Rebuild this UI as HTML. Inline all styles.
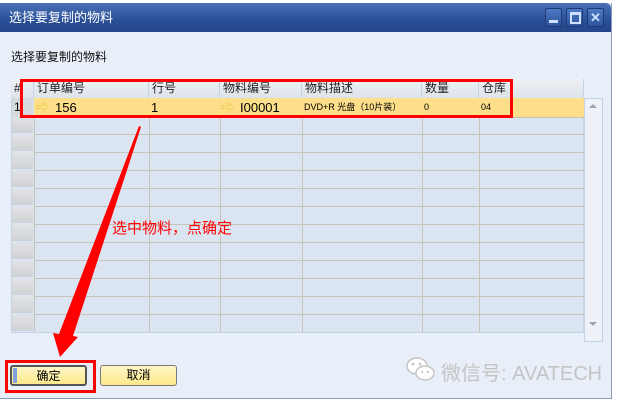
<!DOCTYPE html>
<html><head><meta charset="utf-8"><style>
body{margin:0;width:621px;height:401px;background:#fff;position:relative;overflow:hidden;font-family:"Liberation Sans","Noto Sans CJK SC",sans-serif;}
.win{position:absolute;left:0;top:3px;width:611px;height:395px;background:#e9eff8;border-right:1px solid #8a9bb5;border-bottom:1px solid #8a9bb5;}
.title{position:absolute;left:0;top:0;width:611px;height:29px;background:linear-gradient(#4a72b8,#2a4f96 60%,#244688);border-top-right-radius:5px;color:#fff;font-size:13px;line-height:29px;}
.title span{position:absolute;left:9px;}
.tb{position:absolute;top:5px;width:15px;height:17px;border:1px solid #1d3a75;background:linear-gradient(#4d78c3,#2c549c);border-radius:2px;}
.abs{position:absolute;}
.hdr{position:absolute;top:79px;height:19px;background:linear-gradient(#eef1f5,#dde3ea);border-right:1px solid #c5d3e6;font-size:12px;line-height:19px;padding-left:3px;box-sizing:border-box;color:#222;}
.btn{position:absolute;top:365px;height:21px;width:77px;box-sizing:border-box;border:1px solid #7a7a7a;border-radius:3px;background:linear-gradient(#fff6c8,#fde98a);font-size:12px;line-height:19px;text-align:center;color:#000;}
</style></head><body>
<div class="win">
 <div class="title"><span>选择要复制的物料</span>
  <div class="tb" style="left:545px"><div class="abs" style="left:3px;top:11px;width:9px;height:3px;background:#cfe0ff"></div></div>
  <div class="tb" style="left:566px"><div class="abs" style="left:3px;top:3px;width:7px;height:7px;border:2px solid #cfe0ff;border-top-width:3px"></div></div>
  <div class="tb" style="left:587px;color:#cfe0ff;font-weight:bold;font-size:13px;line-height:17px;text-align:center">✕</div>
 </div>
</div>
<div class="abs" style="left:11px;top:48px;font-size:12px;color:#111">选择要复制的物料</div>
<div class="abs" style="left:11px;top:79px;width:573px;height:254px;background:#dbe5f2;border:1px solid #c5d3e6;box-sizing:border-box"></div>
<div class="hdr" style="left:11px;width:23px">#</div>
<div class="hdr" style="left:34px;width:115px">订单编号</div>
<div class="hdr" style="left:149px;width:71px">行号</div>
<div class="hdr" style="left:220px;width:82px">物料编号</div>
<div class="hdr" style="left:302px;width:120px">物料描述</div>
<div class="hdr" style="left:422px;width:57px">数量</div>
<div class="hdr" style="left:479px;width:105px">仓库</div>
<div id="rows"></div>
<div class="abs" style="left:34px;top:98px;width:550px;height:19px;background:#fddf8a"></div>
<div class="abs" style="left:12px;top:98px;width:21px;height:19px;background:#d6d9de;font-size:12px;line-height:19px;padding-left:2px;box-sizing:border-box">1</div>
<div class="abs" style="top:98px;left:0;height:19px;width:584px;font-size:13px;line-height:19px">
 <span class="abs" style="left:36px;color:#e6c22a">⇨</span><span class="abs" style="left:55px">156</span>
 <span class="abs" style="left:151px">1</span>
 <span class="abs" style="left:221px;color:#e6c22a">⇨</span><span class="abs" style="left:240px">I00001</span>
 <span class="abs" style="left:304px;font-size:9px">DVD+R 光盘（10片装）</span>
 <span class="abs" style="left:424px;font-size:9px">0</span>
 <span class="abs" style="left:481px;font-size:9px">04</span>
</div>
<div class="abs" style="left:584px;top:98px;width:19px;height:244px;background:#eef2f8;border:1px solid #c5d3e6;box-sizing:border-box"></div>
<div class="abs" style="left:589px;top:104px;border:4px solid transparent;border-bottom:4px solid #9aa4b0;border-top:0"></div>
<div class="abs" style="left:589px;top:322px;border:4px solid transparent;border-top:4px solid #9aa4b0;border-bottom:0"></div>
<div class="abs" style="left:20px;top:79px;width:493px;height:39px;border:3px solid #f00;box-sizing:border-box"></div>
<svg class="abs" style="left:0;top:0" width="621" height="401"><polygon points="139,126 141,127 73,336 78,337 60,357 53,333 59,334" fill="#f00"/>
<g fill="#fff" stroke="#c4c4c4" stroke-width="1.5"><ellipse cx="417" cy="366" rx="10" ry="8"/><ellipse cx="425" cy="373" rx="9" ry="7"/></g>
<g fill="#c4c4c4"><circle cx="413" cy="364" r="1.3"/><circle cx="420" cy="364" r="1.3"/><circle cx="422" cy="372" r="1.1"/><circle cx="428" cy="372" r="1.1"/></g></svg>
<div class="abs" style="left:112px;top:217px;font-size:15px;color:#f00">选中物料，点确定</div>
<div class="btn" style="left:10px;border:2px solid #555"><div class="abs" style="left:1px;top:1px;width:4px;height:15px;background:#7fa3d9"></div>确定</div>
<div class="btn" style="left:100px">取消</div>
<div class="abs" style="left:5px;top:360px;width:91px;height:33px;border:3px solid #f00;box-sizing:border-box"></div>
<div class="abs" style="left:441px;top:357px;font-size:20px;color:#c4c4c4">微信号: AVATECH</div>
<script>
var h='';for(var i=1;i<13;i++){var y=98+i*18;h+='<div class="abs" style="left:12px;top:'+(y+1)+'px;width:21px;height:16px;background:linear-gradient(#e0e2e5,#cfd2d6)"></div><div class="abs" style="left:34px;top:'+y+'px;width:550px;height:1px;background:#c9c4b8"></div>';}
[34,149,220,302,422,479].forEach(function(x){h+='<div class="abs" style="left:'+x+'px;top:98px;width:1px;height:234px;background:#c9c4b8"></div>';});
h+='<div class="abs" style="left:34px;top:117px;width:550px;height:1px;background:#c9c4b8"></div>';
document.getElementById('rows').innerHTML=h;
</script>
</body></html>
